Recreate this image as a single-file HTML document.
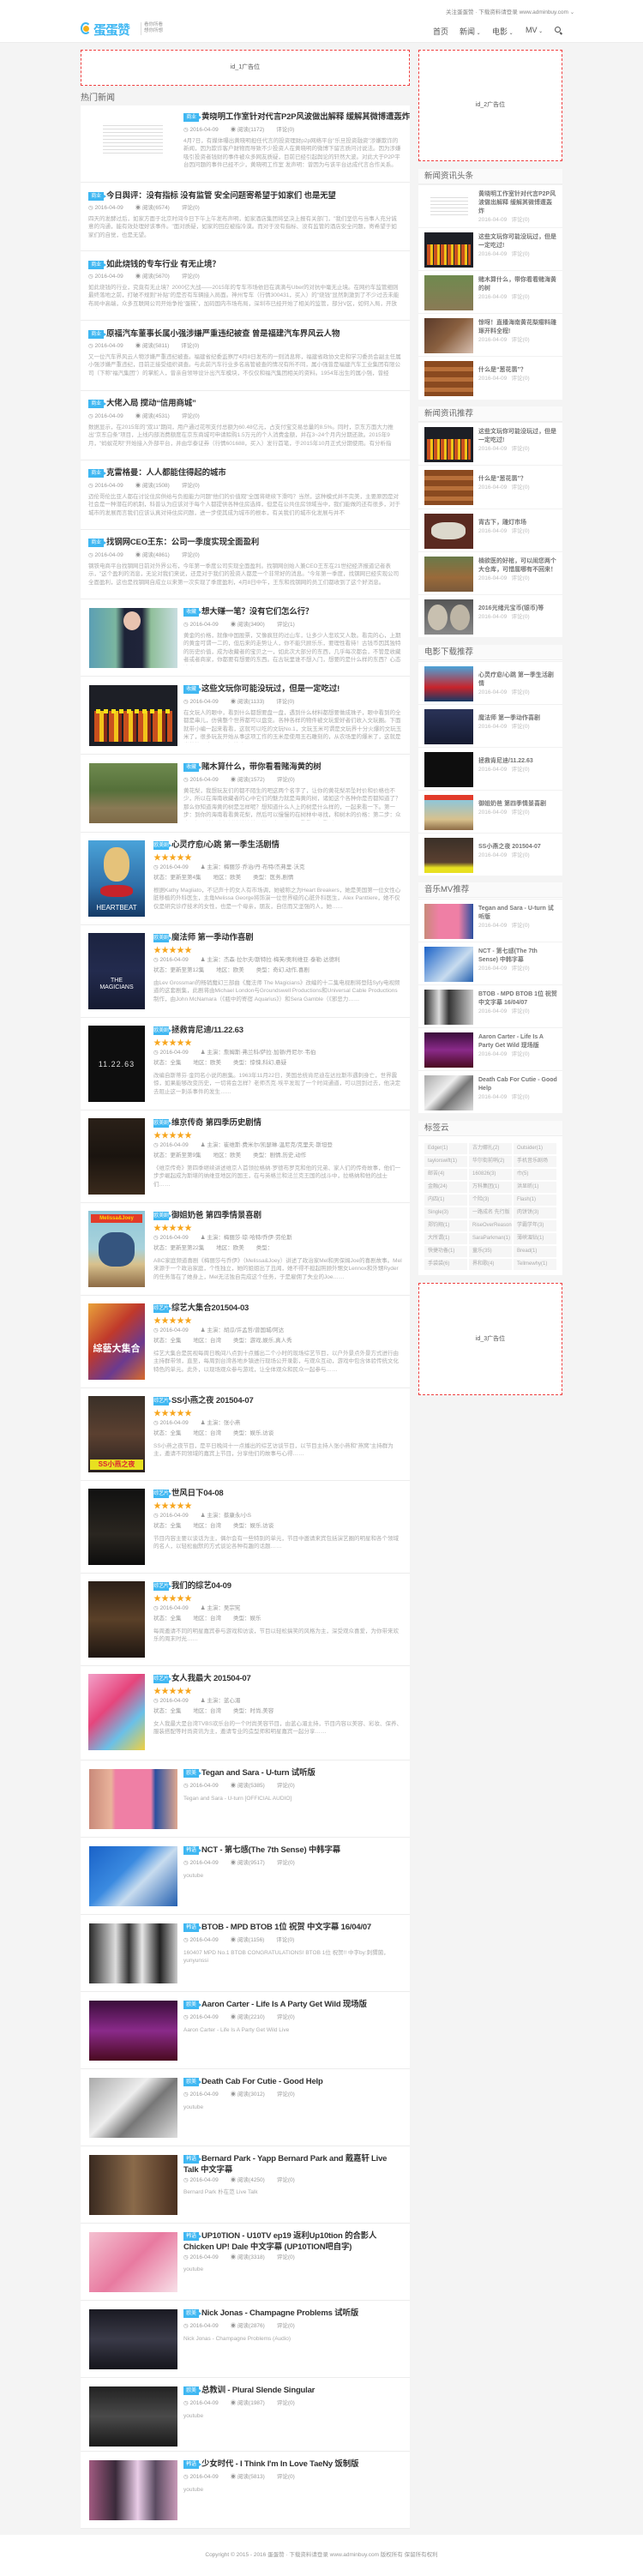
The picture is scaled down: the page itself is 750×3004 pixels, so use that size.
<!DOCTYPE html>
<html><head><meta charset="utf-8">
<style>
*{margin:0;padding:0;box-sizing:border-box}
body{width:750px;height:3004px;background:#f4f4f4;position:relative;font-family:"Liberation Sans","Noto Sans CJK SC",sans-serif;overflow:hidden}
.a{position:absolute}
.hdr{left:0;top:0;width:750px;height:50px;background:#fff;border-bottom:1px solid #ececec}
.card{position:absolute;left:94px;width:384px;background:#fff;border-bottom:1px solid #ececec}
.bd{display:inline-block;background:#3fb7f2;color:#fff;font-size:6px;font-weight:normal;width:18px;height:10px;line-height:10px;text-align:center;vertical-align:1px;margin-right:3px;position:relative}
.bd:after{content:"";position:absolute;right:-3px;top:3px;border-left:3px solid #3fb7f2;border-top:2px solid transparent;border-bottom:2px solid transparent}
.t{position:absolute;font-size:9.5px;font-weight:bold;color:#333;white-space:nowrap;line-height:14px;letter-spacing:-0.2px}
.m{position:absolute;font-size:6.5px;color:#999;white-space:nowrap;line-height:8px}
.m span{margin-right:14px}
.d{position:absolute;font-size:6.5px;color:#aaa;line-height:9.4px;overflow:hidden}
.st{position:absolute;color:#f7a51c;font-size:9px;line-height:10px}
.img{position:absolute}
.ad{position:absolute;background:#fff;border:1px dashed #f04040;font-size:7px;color:#555;text-align:center}
.sb{position:absolute;left:488px;width:168px;background:#fff}
.sh{height:18px;background:#fafafa;border-bottom:1px solid #eee;font-size:9.5px;color:#666;line-height:18px;padding-left:7px}
.r{position:absolute;left:0;width:168px;height:50px;border-top:1px solid #f1f1f1}
.r .i{position:absolute;left:7px;top:5px;width:57px;height:41px}
.r .rt{position:absolute;left:70px;top:6px;width:92px;font-size:7px;font-weight:bold;color:#777;line-height:10px}
.r .rd{font-weight:normal;color:#bbb;font-size:6.5px}
.tg{position:absolute;width:50px;height:13px;background:#f6f6f6;font-size:6px;color:#aaa;line-height:13px;padding-left:4px;overflow:hidden;white-space:nowrap}
</style></head><body>

<div class="a hdr"></div>
<div class="a" style="left:520px;top:8px;font-size:6.5px;color:#888">关注蛋蛋赞 · 下载资料请登录 www.adminbuy.com ⌄</div>
<div class="a" style="left:94px;top:26px;width:12px;height:14px;border:2px solid #3fb7f2;border-radius:50%;border-right-color:transparent"></div>
<div class="a" style="left:97px;top:30px;width:7px;height:7px;background:#f5b018;border-radius:50%"></div>
<div class="a" style="left:109px;top:24px;font-size:15px;font-weight:bold;color:#3fb7f2;letter-spacing:-1px">蛋蛋赞</div>
<div class="a" style="left:164px;top:26px;width:1px;height:15px;background:#ddd"></div>
<div class="a" style="left:168px;top:26px;font-size:5.5px;color:#999;line-height:7px">看你所看<br>想你所想</div>
<div class="a" style="left:505px;top:30px;font-size:9px;color:#555">首页</div>
<div class="a" style="left:536px;top:30px;font-size:9px;color:#555">新闻<span style="font-size:6px"> ⌄</span></div>
<div class="a" style="left:574px;top:30px;font-size:9px;color:#555">电影<span style="font-size:6px"> ⌄</span></div>
<div class="a" style="left:613px;top:30px;font-size:9px;color:#555">MV<span style="font-size:6px"> ⌄</span></div>
<div class="a" style="left:647px;top:31px;width:7px;height:7px;border:1.5px solid #555;border-radius:50%"></div>
<div class="a" style="left:653px;top:38px;width:3px;height:1.5px;background:#555;transform:rotate(45deg)"></div>

<div class="ad" style="left:94px;top:58px;width:384px;height:42px;line-height:40px">id_1广告位</div>
<div class="a" style="left:94px;top:105px;font-size:10px;color:#666">热门新闻</div>

<div class="card" style="top:123px;height:90px">
<div class="img" style="left:16px;top:12px;width:90px;height:70px;background:repeating-linear-gradient(#fff 0 3px,#ddd 3px 4px);background-size:70px 36px;background-position:10px 8px;background-repeat:no-repeat"></div>
<div class="t" style="left:120px;top:7px"><span class="bd">商业</span>黄晓明工作室针对代言P2P风波做出解释 缓解其微博遭轰炸</div>
<div class="m" style="left:120px;top:25px"><span>◷ 2016-04-09</span><span>◉ 阅读(1172)</span><span>评论(0)</span></div>
<div class="d" style="left:120px;top:37px;width:255px;height:40px">4月7日，有媒体曝出黄晓明担任代言的投资理财p2p网络平台"乐旦投资融资"涉嫌欺诈的新闻，因为欺诈客户财物而导致不少投资人在黄晓明的微博下留言质问讨说法。因为涉嫌吸引投资者钱财的事件被众多网友质疑，目前已经引起舆论的轩然大波。对此大于P2P平台因问题的事件已经不少，黄晓明工作室 发声明：曾因为与该平台达成代言合作关系。</div>
</div>

<div class="card" style="top:213px;height:80px">
<div class="t" style="left:9px;top:9px"><span class="bd">商业</span>今日舆评：没有指标 没有监管 安全问题寄希望于如家们 也是无望</div>
<div class="m" style="left:9px;top:26px"><span>◷ 2016-04-09</span><span>◉ 阅读(6574)</span><span>评论(0)</span></div>
<div class="d" style="left:9px;top:38px;width:365px;height:29px">四天的发酵过后，如家方面于北京时间今日下午上午发布声明，如家酒店集团将坚决上报有关部门，"我们坚信与当事人充分诚意的沟通，能有效处理好该事件。"面对质疑，如家的回应被指冷漠。而对于没有指标、没有监管的酒店安全问题，寄希望于如家们的自觉，也是无望。</div>
</div>
<div class="card" style="top:293px;height:81px">
<div class="t" style="left:9px;top:9px"><span class="bd">商业</span>如此烧钱的专车行业 有无止境？</div>
<div class="m" style="left:9px;top:26px"><span>◷ 2016-04-09</span><span>◉ 阅读(5670)</span><span>评论(0)</span></div>
<div class="d" style="left:9px;top:38px;width:365px;height:29px">如此烧钱的行业，究竟有无止境？2000亿大战——2015年的专车市场依旧在滴滴与Uber的对抗中毫无止境。在网约车监管细则最终落地之前，打破不规则"补贴"的是否有车辆接入局面。神州专车（行情300431，买入）的"烧钱"显然刺激到了不少过去未能布局中高端，众多互联网公司开始争抢"蛋糕"，加码国内市场布局，深圳市已经开始了相关的监管，部分V区，如何入局，开放门大</div>
</div>
<div class="card" style="top:374px;height:82px">
<div class="t" style="left:9px;top:9px"><span class="bd">商业</span>原福汽车董事长属小强涉嫌严重违纪被查 曾是福建汽车界风云人物</div>
<div class="m" style="left:9px;top:26px"><span>◷ 2016-04-09</span><span>◉ 阅读(5811)</span><span>评论(0)</span></div>
<div class="d" style="left:9px;top:38px;width:365px;height:29px">又一位汽车界风云人物涉嫌严重违纪被查。福建省纪委监察厅4月8日发布的一则消息称，福建省政协文史和学习委员会副主任属小强涉嫌严重违纪，目前正接受组织调查。与此前汽车行业多名高管被查的情况有所不同，属小强曾是福建汽车工业集团有限公司（下称"福汽集团"）的掌舵人，曾亲自领导设计出汽车模块，不仅仅和福汽集团相关的资料。1954年出生的属小强，曾经</div>
</div>
<div class="card" style="top:456px;height:81px">
<div class="t" style="left:9px;top:8px"><span class="bd">商业</span>大佬入局 搅动“信用商城”</div>
<div class="m" style="left:9px;top:26px"><span>◷ 2016-04-09</span><span>◉ 阅读(4531)</span><span>评论(0)</span></div>
<div class="d" style="left:9px;top:38px;width:365px;height:29px">数据显示，在2015年的"双11"期间，用户通过花呗支付总额为60.48亿元，占支付宝交易总量的8.5%。同时，京东方面大力推出"京东白条"项目，上线内部消费额度在京东商城可申请赊购1.5万元的个人消费金额，并在3~24个月内分期还款。2015年9月，"蚂蚁花呗"开始接入外部平台，并由华泰证券（行情601688，买入）发行首笔，于2015年10月正式分期使用。有分析指出，经</div>
</div>
<div class="card" style="top:537px;height:81px">
<div class="t" style="left:9px;top:8px"><span class="bd">商业</span>克雷格曼：人人都能住得起的城市</div>
<div class="m" style="left:9px;top:26px"><span>◷ 2016-04-09</span><span>◉ 阅读(1508)</span><span>评论(0)</span></div>
<div class="d" style="left:9px;top:38px;width:365px;height:29px">迈伦哥伦比亚人都在讨论住房供给与负担能力问题"他们的价值观"全国将继续下滑吗？当然，这种模式并不完美，主要原因是对社会是一种潜在的机制，科普认为应该对于每个人都提供各种住房选择，但是在公共住房领域当中，我们能做的还有很多，对于城市的发展而言我们应该认真对待住房问题，进一步使其成为城市的根本，有关我们的城市化发展与并不</div>
</div>
<div class="card" style="top:618px;height:81px">
<div class="t" style="left:9px;top:8px"><span class="bd">商业</span>找钢网CEO王东：公司一季度实现全面盈利</div>
<div class="m" style="left:9px;top:26px"><span>◷ 2016-04-09</span><span>◉ 阅读(4861)</span><span>评论(0)</span></div>
<div class="d" style="left:9px;top:38px;width:365px;height:29px">钢铁电商平台找钢网日前对外界公布，今年第一季度公司实现全面盈利。找钢网创始人兼CEO王东在21世纪经济报道记者表示，"这个盈利的消息，无论对我们来说，还是对于我们的投资人都是一个非常好的消息。"今年第一季度，找钢网已经实现公司全面盈利，这也是找钢网自成立以来第一次实现了季度盈利，4月8日中午，王东和找钢网的员工们都收到了这个好消息。</div>
</div>

<div class="card" style="top:699px;height:90px">
<div class="img" style="left:10px;top:10px;width:103px;height:70px;background:linear-gradient(90deg,#5b9fb4 0,#7bb6a0 30%,#1c2236 40%,#20243a 60%,#8fbf9a 70%,#c8dde0 100%)"><div style="position:absolute;left:40px;top:4px;width:20px;height:22px;border-radius:50%;background:#e8c3b0"></div></div>
<div class="t" style="left:120px;top:8px"><span class="bd">收藏</span>想大赚一笔？没有它们怎么行？</div>
<div class="m" style="left:120px;top:26px"><span>◷ 2016-04-09</span><span>◉ 阅读(3490)</span><span>评论(1)</span></div>
<div class="d" style="left:120px;top:38px;width:255px;height:39px">黄金的价格，就像中国股票，又像疯狂的过山车，让多少人悲欢又人散。看完的心，上期的黄金可谓一二的，但后来的走势让人，你不能只顾乐乐，要理性看待！古钱币因其独特的历史价值，成为收藏者的宝贝之一，如此次大部分的东西，几乎每次都会，不管是收藏者或者商家，你都要有想要的东西。在古玩里谁不想入门，想要的是什么样的东西？心态决定了古玩圈。</div>
</div>
<div class="card" style="top:789px;height:91px">
<div class="img" style="left:10px;top:10px;width:103px;height:71px;background:#1d1f26"><div style="position:absolute;left:6px;right:6px;top:30px;height:36px;background:repeating-linear-gradient(90deg,#c9501e 0 6px,#f2c31a 6px 11px,#8a2a18 11px 15px,#1d1f26 15px 17px)"></div><div style="position:absolute;left:8px;right:8px;top:28px;height:5px;background:repeating-linear-gradient(90deg,#f6e01a 0 5px,transparent 5px 9px)"></div></div>
<div class="t" style="left:120px;top:8px"><span class="bd">收藏</span>这些文玩你可能没玩过，但是一定吃过!</div>
<div class="m" style="left:120px;top:26px"><span>◷ 2016-04-09</span><span>◉ 阅读(1133)</span><span>评论(0)</span></div>
<div class="d" style="left:120px;top:38px;width:255px;height:39px">在文玩人的眼中，看到什么都想要盘一盘，遇到什么材料都想要做成珠子，眼中看到的全都是串儿，仿佛整个世界都可以盘变。各种各样的物件被文玩爱好者们收入文玩圈。下面就带小编一起来看看，这就可以吃的文玩No.1，文玩玉米可谓是文玩界十分火爆的文玩玉米了，很多玩友开始从事这项工作的玉米是使用玉石雕刻的，从农场里的爆米了，这就是当着的玉米，而且还能吃</div>
</div>
<div class="card" style="top:880px;height:91px">
<div class="img" style="left:10px;top:10px;width:103px;height:70px;background:linear-gradient(#6f8a4f,#55703a 45%,#8a7a55 75%,#7e6a47)"></div>
<div class="t" style="left:120px;top:8px"><span class="bd">收藏</span>赌木算什么，带你看看赌海黄的树</div>
<div class="m" style="left:120px;top:26px"><span>◷ 2016-04-09</span><span>◉ 阅读(1572)</span><span>评论(0)</span></div>
<div class="d" style="left:120px;top:38px;width:255px;height:39px">黄花梨，我想玩友们的都不陌生的吧这两个名字了，让你的黄花梨吊坠时价和价格也不少，所以在海南收藏者的心中它们的魅力就是海黄的树，诸如这个各种你是否都知道了？那么你知道海黄的树是怎样呢？想知道什么人上的树是什么样的，一起来看一下。第一步：到你的海南看看黄花梨，然后可以慢慢的在树林中寻找，和树木的价格：第二步：众人一起开始把这棵树认认清楚，第三步：你可以看看已经看到</div>
</div>

<div class="card" style="top:971px;height:108px">
<div class="img" style="left:9px;top:9px;width:66px;height:89px;background:linear-gradient(#4aa3d9,#2f6fa8 60%,#153a66)"><div style="position:absolute;left:18px;top:8px;width:30px;height:40px;border-radius:45%;background:#e5c27a"></div><div style="position:absolute;left:14px;top:52px;width:38px;height:14px;background:#c8232a;border-radius:40%"></div><div style="position:absolute;left:0;right:0;top:74px;text-align:center;color:#fff;font-size:8px">HEARTBEAT</div></div>
<div class="t" style="left:85px;top:8px"><span class="bd">欧美剧</span>心灵疗愈/心跳 第一季生活剧情</div>
<div class="st" style="left:85px;top:24px">★★★★★</div>
<div class="m" style="left:85px;top:37px"><span>◷ 2016-04-09</span><span>♟ 主演：梅丽莎·乔治/丹·布特/杰弗里·沃克</span></div>
<div class="m" style="left:85px;top:49px"><span>状态：更新至第4集</span><span>地区：欧美</span><span>类型：医务,剧情</span></div>
<div class="d" style="left:85px;top:63px;width:290px;height:29px">根据Kathy Magliato，不记声十的女人有市场调，她被称之为Heart Breakers，她是美国第一位女性心脏移植的外科医生，主角Melissa George将饰演一位世界级的心脏外科医生，Alex Panttiere，她不仅仅是研究诊疗技术的女性，也是一个母亲，朋友，自信而又坚强的人，她……</div>
</div>
<div class="card" style="top:1079px;height:108px">
<div class="img" style="left:9px;top:9px;width:66px;height:89px;background:linear-gradient(#1b2340,#232b4e 50%,#151a30)"><div style="position:absolute;left:0;right:0;top:52px;text-align:center;color:#fff;font-size:7px;line-height:8px">THE<br>MAGICIANS</div></div>
<div class="t" style="left:85px;top:8px"><span class="bd">欧美剧</span>魔法师 第一季动作喜剧</div>
<div class="st" style="left:85px;top:24px">★★★★★</div>
<div class="m" style="left:85px;top:37px"><span>◷ 2016-04-09</span><span>♟ 主演：杰森·拉尔夫/斯特拉·梅芙/奥利维亚·泰勒·达德利</span></div>
<div class="m" style="left:85px;top:49px"><span>状态：更新至第12集</span><span>地区：欧美</span><span>类型：奇幻,动作,喜剧</span></div>
<div class="d" style="left:85px;top:63px;width:290px;height:29px">由Lev Grossman的畅销魔幻三部曲《魔法师 The Magicians》改编的十二集电视剧将登陆Syfy电视频道的这套剧集，此剧将由Michael London与Groundswell Productions和Universal Cable Productions制作，由John McNamara（《瓶中的寄宿 Aquarius》）和Sera Gamble（《邪恶力……</div>
</div>
<div class="card" style="top:1187px;height:108px">
<div class="img" style="left:9px;top:9px;width:66px;height:89px;background:#0e0e0e"><div style="position:absolute;left:0;right:0;top:40px;text-align:center;color:#ddd;font-size:9px;letter-spacing:1px">11.22.63</div></div>
<div class="t" style="left:85px;top:8px"><span class="bd">欧美剧</span>拯救肯尼迪/11.22.63</div>
<div class="st" style="left:85px;top:24px">★★★★★</div>
<div class="m" style="left:85px;top:37px"><span>◷ 2016-04-09</span><span>♟ 主演：詹姆斯·弗兰科/萨拉·加顿/丹尼尔·韦伯</span></div>
<div class="m" style="left:85px;top:49px"><span>状态：全集</span><span>地区：欧美</span><span>类型：惊悚,科幻,悬疑</span></div>
<div class="d" style="left:85px;top:63px;width:290px;height:29px">改编自斯蒂芬·金同名小说的剧集。1963年11月22日，美国总统肯尼迪在达拉斯市遇刺身亡，世界震惊，如果能够改变历史，一切将会怎样？老师杰克·埃平发现了一个时间通道，可以回到过去，他决定去阻止这一刺杀事件的发生……</div>
</div>
<div class="card" style="top:1295px;height:108px">
<div class="img" style="left:9px;top:9px;width:66px;height:89px;background:linear-gradient(#2a2018,#1a140f 50%,#3a2a1c)"></div>
<div class="t" style="left:85px;top:8px"><span class="bd">欧美剧</span>维京传奇 第四季历史剧情</div>
<div class="st" style="left:85px;top:24px">★★★★★</div>
<div class="m" style="left:85px;top:37px"><span>◷ 2016-04-09</span><span>♟ 主演：崔维斯·费米尔/凯瑟琳·温尼克/克里夫·斯坦登</span></div>
<div class="m" style="left:85px;top:49px"><span>状态：更新至第9集</span><span>地区：欧美</span><span>类型：剧情,历史,动作</span></div>
<div class="d" style="left:85px;top:63px;width:290px;height:29px">《维京传奇》第四季继续讲述维京人首领拉格纳·罗德布罗克和他的兄弟、家人们的传奇故事，他们一步步崛起成为斯堪的纳维亚地区的国王，在与英格兰和法兰克王国的战斗中，拉格纳和他的战士们……</div>
</div>
<div class="card" style="top:1403px;height:108px">
<div class="img" style="left:9px;top:9px;width:66px;height:89px;background:linear-gradient(#8fc6d8,#a9d3dc 50%,#d8c18d 70%,#8d6b46)"><div style="position:absolute;left:3px;top:4px;width:60px;height:10px;background:#e23b2a;color:#ffd600;font-size:6px;text-align:center;line-height:10px;font-weight:bold">Melissa&amp;Joey</div><div style="position:absolute;left:12px;top:25px;width:42px;height:40px;background:#35557f;border-radius:40%"></div></div>
<div class="t" style="left:85px;top:8px"><span class="bd">欧美剧</span>御姐奶爸 第四季情景喜剧</div>
<div class="st" style="left:85px;top:24px">★★★★★</div>
<div class="m" style="left:85px;top:37px"><span>◷ 2016-04-09</span><span>♟ 主演：梅丽莎·琼·哈特/乔伊·劳伦斯</span></div>
<div class="m" style="left:85px;top:49px"><span>状态：更新至第22集</span><span>地区：欧美</span><span>类型：</span></div>
<div class="d" style="left:85px;top:63px;width:290px;height:29px">ABC家庭频道喜剧《梅丽莎与乔伊》（Melissa&amp;Joey）讲述了政治家Mel和男保姆Joe的喜剧故事。Mel来源于一个政治家庭，个性独立，她的姐姐出了丑闻，她不得不担起照顾外甥女Lennox和外甥Ryder的任务落在了她身上，Mel无法独自完成这个任务，于是雇佣了失业的Joe……</div>
</div>
<div class="card" style="top:1511px;height:108px">
<div class="img" style="left:9px;top:9px;width:66px;height:89px;background:linear-gradient(135deg,#e9a23a,#c0392b 40%,#6b3a8f 70%,#d86a2a)"><div style="position:absolute;left:0;right:0;top:44px;text-align:center;color:#fff;font-size:11px;font-weight:bold">綜藝大集合</div></div>
<div class="t" style="left:85px;top:8px"><span class="bd">综艺片</span>综艺大集合201504-03</div>
<div class="st" style="left:85px;top:24px">★★★★★</div>
<div class="m" style="left:85px;top:37px"><span>◷ 2016-04-09</span><span>♟ 主演：胡瓜/许孟哲/曾国城/阿达</span></div>
<div class="m" style="left:85px;top:49px"><span>状态：全集</span><span>地区：台湾</span><span>类型：游戏,娱乐,真人秀</span></div>
<div class="d" style="left:85px;top:63px;width:290px;height:29px">综艺大集合是民视每周日晚间八点到十点播出二个小时的现场综艺节目，以户外景点外景方式进行由主持群带领，直至，每周到台湾各地乡镇进行现场公开录影，与观众互动，游戏中包含体验传统文化特色的单元。此外，以现场观众参与游戏，让全体观众和民众一起参与……</div>
</div>
<div class="card" style="top:1619px;height:108px">
<div class="img" style="left:9px;top:9px;width:66px;height:89px;background:linear-gradient(#3a3028,#5b4030 50%,#2a2220)"><div style="position:absolute;left:2px;right:2px;bottom:3px;height:12px;background:#e8e020;color:#d23;font-size:8px;font-weight:bold;text-align:center;line-height:12px">SS小燕之夜</div></div>
<div class="t" style="left:85px;top:8px"><span class="bd">综艺片</span>SS小燕之夜 201504-07</div>
<div class="st" style="left:85px;top:24px">★★★★★</div>
<div class="m" style="left:85px;top:37px"><span>◷ 2016-04-09</span><span>♟ 主演：张小燕</span></div>
<div class="m" style="left:85px;top:49px"><span>状态：全集</span><span>地区：台湾</span><span>类型：娱乐,访谈</span></div>
<div class="d" style="left:85px;top:63px;width:290px;height:29px">SS小燕之夜节目，是平日晚间十一点播出的综艺访谈节目，以节目主持人张小燕和"燕窝"主持群为主，邀请不同领域的嘉宾上节目，分享他们的故事与心得……</div>
</div>
<div class="card" style="top:1727px;height:108px">
<div class="img" style="left:9px;top:9px;width:66px;height:89px;background:linear-gradient(#111,#2a2620 60%,#0d0d0d)"></div>
<div class="t" style="left:85px;top:8px"><span class="bd">综艺片</span>世风日下04-08</div>
<div class="st" style="left:85px;top:24px">★★★★★</div>
<div class="m" style="left:85px;top:37px"><span>◷ 2016-04-09</span><span>♟ 主演：蔡康永/小S</span></div>
<div class="m" style="left:85px;top:49px"><span>状态：全集</span><span>地区：台湾</span><span>类型：娱乐,访谈</span></div>
<div class="d" style="left:85px;top:63px;width:290px;height:29px">节目内容主要以谈话为主，偶尔会有一些特别的单元，节目中邀请来宾包括演艺圈的明星和各个领域的名人，以轻松幽默的方式谈论各种有趣的话题……</div>
</div>
<div class="card" style="top:1835px;height:108px">
<div class="img" style="left:9px;top:9px;width:66px;height:89px;background:linear-gradient(#2b1f18,#5a4028 50%,#1e1612)"></div>
<div class="t" style="left:85px;top:8px"><span class="bd">综艺片</span>我们的综艺04-09</div>
<div class="st" style="left:85px;top:24px">★★★★★</div>
<div class="m" style="left:85px;top:37px"><span>◷ 2016-04-09</span><span>♟ 主演：吴宗宪</span></div>
<div class="m" style="left:85px;top:49px"><span>状态：全集</span><span>地区：台湾</span><span>类型：娱乐</span></div>
<div class="d" style="left:85px;top:63px;width:290px;height:29px">每周邀请不同的明星嘉宾参与游戏和访谈，节目以轻松搞笑的风格为主，深受观众喜爱，为你带来欢乐的周末时光……</div>
</div>
<div class="card" style="top:1943px;height:110px">
<div class="img" style="left:9px;top:9px;width:66px;height:89px;background:linear-gradient(135deg,#f2a0c8,#e6457c 40%,#6ac0e8 70%,#f0d040)"></div>
<div class="t" style="left:85px;top:8px"><span class="bd">综艺片</span>女人我最大 201504-07</div>
<div class="st" style="left:85px;top:24px">★★★★★</div>
<div class="m" style="left:85px;top:37px"><span>◷ 2016-04-09</span><span>♟ 主演：蓝心湄</span></div>
<div class="m" style="left:85px;top:49px"><span>状态：全集</span><span>地区：台湾</span><span>类型：时尚,美容</span></div>
<div class="d" style="left:85px;top:63px;width:290px;height:29px">女人我最大是台湾TVBS欢乐台的一个时尚美容节目，由蓝心湄主持，节目内容以美容、彩妆、保养、服装搭配等时尚资讯为主，邀请专业的造型师和明星嘉宾一起分享……</div>
</div>

<div class="card" style="top:2053px;height:90px">
<div class="img" style="left:10px;top:10px;width:103px;height:70px;background:linear-gradient(90deg,#c98a7a 0,#e9b39b 25%,#ef7fa5 30%,#ef7fa5 70%,#2a4fa0 75%,#e0a890 100%)"></div>
<div class="t" style="left:120px;top:8px"><span class="bd">欧美</span>Tegan and Sara - U-turn 试听版</div>
<div class="m" style="left:120px;top:26px"><span>◷ 2016-04-09</span><span>◉ 阅读(5385)</span><span>评论(0)</span></div>
<div class="d" style="left:120px;top:40px;width:255px">Tegan and Sara - U-turn [OFFICIAL AUDIO]</div>
</div>
<div class="card" style="top:2143px;height:90px">
<div class="img" style="left:10px;top:10px;width:103px;height:70px;background:linear-gradient(135deg,#1a62c8,#3a8ae0 40%,#c8dcef 60%,#2460b0)"></div>
<div class="t" style="left:120px;top:8px"><span class="bd">韩语</span>NCT - 第七感(The 7th Sense) 中韩字幕</div>
<div class="m" style="left:120px;top:26px"><span>◷ 2016-04-09</span><span>◉ 阅读(9517)</span><span>评论(0)</span></div>
<div class="d" style="left:120px;top:40px;width:255px">youtube</div>
</div>
<div class="card" style="top:2233px;height:90px">
<div class="img" style="left:10px;top:10px;width:103px;height:70px;background:linear-gradient(90deg,#2a2a2a,#ddd 30%,#333 45%,#e8e8e8 60%,#222 80%,#ccc)"></div>
<div class="t" style="left:120px;top:8px"><span class="bd">韩语</span>BTOB - MPD BTOB 1位 祝贺 中文字幕 16/04/07</div>
<div class="m" style="left:120px;top:26px"><span>◷ 2016-04-09</span><span>◉ 阅读(1156)</span><span>评论(0)</span></div>
<div class="d" style="left:120px;top:40px;width:255px">160407 MPD No.1 BTOB CONGRATULATIONS! BTOB 1位 祝贺!! 中字by:刺猬菌，yunyunssi</div>
</div>
<div class="card" style="top:2323px;height:90px">
<div class="img" style="left:10px;top:10px;width:103px;height:70px;background:linear-gradient(#3a0d3a,#8a2a8a 50%,#4a0a20)"></div>
<div class="t" style="left:120px;top:8px"><span class="bd">欧美</span>Aaron Carter - Life Is A Party Get Wild 现场版</div>
<div class="m" style="left:120px;top:26px"><span>◷ 2016-04-09</span><span>◉ 阅读(2210)</span><span>评论(0)</span></div>
<div class="d" style="left:120px;top:40px;width:255px">Aaron Carter - Life Is A Party Get Wild Live</div>
</div>
<div class="card" style="top:2413px;height:90px">
<div class="img" style="left:10px;top:10px;width:103px;height:70px;background:linear-gradient(135deg,#aaa,#eee 40%,#777 60%,#ddd)"></div>
<div class="t" style="left:120px;top:8px"><span class="bd">欧美</span>Death Cab For Cutie - Good Help</div>
<div class="m" style="left:120px;top:26px"><span>◷ 2016-04-09</span><span>◉ 阅读(3012)</span><span>评论(0)</span></div>
<div class="d" style="left:120px;top:40px;width:255px">youtube</div>
</div>
<div class="card" style="top:2503px;height:90px">
<div class="img" style="left:10px;top:10px;width:103px;height:70px;background:linear-gradient(90deg,#3a2a20,#8a6a4a 50%,#4a3020)"></div>
<div class="t" style="left:120px;top:8px;white-space:normal;width:255px;line-height:13px"><span class="bd">韩语</span>Bernard Park - Yapp Bernard Park and 戴嘉轩 Live Talk 中文字幕</div>
<div class="m" style="left:120px;top:36px"><span>◷ 2016-04-09</span><span>◉ 阅读(4250)</span><span>评论(0)</span></div>
<div class="d" style="left:120px;top:49px;width:255px">Bernard Park 朴在范 Live Talk</div>
</div>
<div class="card" style="top:2593px;height:90px">
<div class="img" style="left:10px;top:10px;width:103px;height:70px;background:linear-gradient(135deg,#f4c0d0,#e87aa0 50%,#f8e0e8)"></div>
<div class="t" style="left:120px;top:8px;white-space:normal;width:255px;line-height:13px"><span class="bd">韩语</span>UP10TION - U10TV ep19 返利Up10tion 的合影人 Chicken UP! Dale 中文字幕 (UP10TION吧自字)</div>
<div class="m" style="left:120px;top:36px"><span>◷ 2016-04-09</span><span>◉ 阅读(3318)</span><span>评论(0)</span></div>
<div class="d" style="left:120px;top:49px;width:255px">youtube</div>
</div>
<div class="card" style="top:2683px;height:90px">
<div class="img" style="left:10px;top:10px;width:103px;height:70px;background:linear-gradient(#1a1a22,#3a3a48 50%,#15151c)"></div>
<div class="t" style="left:120px;top:8px"><span class="bd">欧美</span>Nick Jonas - Champagne Problems 试听版</div>
<div class="m" style="left:120px;top:26px"><span>◷ 2016-04-09</span><span>◉ 阅读(2876)</span><span>评论(0)</span></div>
<div class="d" style="left:120px;top:40px;width:255px">Nick Jonas - Champagne Problems (Audio)</div>
</div>
<div class="card" style="top:2773px;height:86px">
<div class="img" style="left:10px;top:10px;width:103px;height:70px;background:linear-gradient(#222,#4a4a4a 50%,#1a1a1a)"></div>
<div class="t" style="left:120px;top:8px"><span class="bd">欧美</span>总教训 - Plural Slende Singular</div>
<div class="m" style="left:120px;top:26px"><span>◷ 2016-04-09</span><span>◉ 阅读(1987)</span><span>评论(0)</span></div>
<div class="d" style="left:120px;top:40px;width:255px">youtube</div>
</div>
<div class="card" style="top:2859px;height:90px">
<div class="img" style="left:10px;top:10px;width:103px;height:70px;background:linear-gradient(90deg,#a05a80,#3a2a3a 30%,#eacde8 55%,#5a4a60 75%,#c89ab8)"></div>
<div class="t" style="left:120px;top:8px"><span class="bd">韩语</span>少女时代 - I Think I'm In Love TaeNy 饭制版</div>
<div class="m" style="left:120px;top:26px"><span>◷ 2016-04-09</span><span>◉ 阅读(5813)</span><span>评论(0)</span></div>
<div class="d" style="left:120px;top:40px;width:255px">youtube</div>
</div>

<div class="a" style="left:0;top:2956px;width:750px;height:48px;background:#fff"></div>
<div class="a" style="left:0;top:2973px;width:750px;text-align:center;font-size:6.5px;color:#999">Copyright © 2015 - 2016 蛋蛋赞 · 下载资料请登录 www.adminbuy.com 版权所有 保留所有权利</div>

<div class="ad" style="left:488px;top:58px;width:168px;height:130px;line-height:128px">id_2广告位</div>

<div class="sb" style="top:197px;height:269px"><div class="sh">新闻资讯头条</div>
<div class="r" style="top:18px"><div class="i" style="background:repeating-linear-gradient(#fff 0 3px,#ddd 3px 4px);background-size:44px 26px;background-position:7px 6px;background-repeat:no-repeat"></div><div class="rt">黄晓明工作室针对代言P2P风波做出解释 缓解其微博遭轰炸<br><span class="rd">2016-04-09 &nbsp; 评论(0)</span></div></div>
<div class="r" style="top:68px"><div class="i" style="background:#1d1f26"><div style="position:absolute;left:3px;right:3px;top:14px;height:24px;background:repeating-linear-gradient(90deg,#c9501e 0 4px,#f2c31a 4px 7px,#1d1f26 7px 8px)"></div></div><div class="rt">这些文玩你可能没玩过，但是一定吃过!<br><span class="rd">2016-04-09 &nbsp; 评论(0)</span></div></div>
<div class="r" style="top:118px"><div class="i" style="background:linear-gradient(#6f8a4f,#8a7a55)"></div><div class="rt">赌木算什么，带你看看赌海黄的树<br><span class="rd">2016-04-09 &nbsp; 评论(0)</span></div></div>
<div class="r" style="top:168px"><div class="i" style="background:linear-gradient(135deg,#5a3a2a,#8a6040 50%,#d8c0b0)"></div><div class="rt">惊呀！直播海南黄花梨瘿料雕琢开料全程!<br><span class="rd">2016-04-09 &nbsp; 评论(0)</span></div></div>
<div class="r" style="top:218px"><div class="i" style="background:repeating-linear-gradient(#8a4a20 0 7px,#b8703a 7px 12px)"></div><div class="rt" style="top:11px">什么是“葱花翡”？<br><span class="rd">2016-04-09 &nbsp; 评论(0)</span></div></div>
</div>

<div class="sb" style="top:474px;height:269px"><div class="sh">新闻资讯推荐</div>
<div class="r" style="top:18px"><div class="i" style="background:#1d1f26"><div style="position:absolute;left:3px;right:3px;top:14px;height:24px;background:repeating-linear-gradient(90deg,#c9501e 0 4px,#f2c31a 4px 7px,#1d1f26 7px 8px)"></div></div><div class="rt">这些文玩你可能没玩过，但是一定吃过!<br><span class="rd">2016-04-09 &nbsp; 评论(0)</span></div></div>
<div class="r" style="top:68px"><div class="i" style="background:repeating-linear-gradient(#8a4a20 0 7px,#b8703a 7px 12px)"></div><div class="rt" style="top:11px">什么是“葱花翡”？<br><span class="rd">2016-04-09 &nbsp; 评论(0)</span></div></div>
<div class="r" style="top:119px"><div class="i" style="background:#5a2a20"><div style="position:absolute;left:8px;top:10px;width:40px;height:20px;background:#dcd8cc;border-radius:40%"></div></div><div class="rt" style="top:11px">宵古下，雕灯市场<br><span class="rd">2016-04-09 &nbsp; 评论(0)</span></div></div>
<div class="r" style="top:169px"><div class="i" style="background:linear-gradient(#6a7a4a,#9a6a3a 60%,#7a5a3a)"></div><div class="rt">楠欲医的好棺，可以闹您两个大仓库，可惜属哪有不回来！<br><span class="rd">2016-04-09 &nbsp; 评论(0)</span></div></div>
<div class="r" style="top:219px"><div class="i" style="background:linear-gradient(#555,#888)"><div style="position:absolute;left:4px;top:6px;width:23px;height:30px;border-radius:50%;background:#c8c0b0"></div><div style="position:absolute;left:30px;top:6px;width:23px;height:30px;border-radius:50%;background:#bdb5a5"></div></div><div class="rt" style="top:11px">2016光绪元宝币(银币)等<br><span class="rd">2016-04-09 &nbsp; 评论(0)</span></div></div>
</div>

<div class="sb" style="top:752px;height:269px"><div class="sh">电影下载推荐</div>
<div class="r" style="top:19px"><div class="i" style="background:linear-gradient(#4aa3d9,#c8232a 60%,#153a66)"></div><div class="rt" style="top:11px">心灵疗愈/心跳 第一季生活剧情<br><span class="rd">2016-04-09 &nbsp; 评论(0)</span></div></div>
<div class="r" style="top:69px"><div class="i" style="background:linear-gradient(#2a3358,#151a30)"></div><div class="rt" style="top:11px">魔法师 第一季动作喜剧<br><span class="rd">2016-04-09 &nbsp; 评论(0)</span></div></div>
<div class="r" style="top:119px"><div class="i" style="background:#0e0e0e"></div><div class="rt" style="top:11px">拯救肯尼迪/11.22.63<br><span class="rd">2016-04-09 &nbsp; 评论(0)</span></div></div>
<div class="r" style="top:169px"><div class="i" style="background:linear-gradient(#e23b2a 0 15%,#8fc6d8 15%,#d8c18d 70%,#8d6b46)"></div><div class="rt" style="top:11px">御姐奶爸 第四季情景喜剧<br><span class="rd">2016-04-09 &nbsp; 评论(0)</span></div></div>
<div class="r" style="top:219px"><div class="i" style="background:linear-gradient(#3a3028,#5b4030 70%,#e8e020 85%)"></div><div class="rt" style="top:11px">SS小燕之夜 201504-07<br><span class="rd">2016-04-09 &nbsp; 评论(0)</span></div></div>
</div>

<div class="sb" style="top:1029px;height:269px"><div class="sh">音乐MV推荐</div>
<div class="r" style="top:19px"><div class="i" style="background:linear-gradient(90deg,#c98a7a,#ef7fa5 30%,#ef7fa5 70%,#2a4fa0)"></div><div class="rt">Tegan and Sara - U-turn 试听版<br><span class="rd">2016-04-09 &nbsp; 评论(0)</span></div></div>
<div class="r" style="top:69px"><div class="i" style="background:linear-gradient(135deg,#1a62c8,#c8dcef 60%,#2460b0)"></div><div class="rt">NCT - 第七感(The 7th Sense) 中韩字幕<br><span class="rd">2016-04-09 &nbsp; 评论(0)</span></div></div>
<div class="r" style="top:119px"><div class="i" style="background:linear-gradient(90deg,#2a2a2a,#ddd 30%,#333 50%,#ccc)"></div><div class="rt">BTOB - MPD BTOB 1位 祝贺 中文字幕 16/04/07<br><span class="rd">2016-04-09 &nbsp; 评论(0)</span></div></div>
<div class="r" style="top:169px"><div class="i" style="background:linear-gradient(#3a0d3a,#8a2a8a 50%,#4a0a20)"></div><div class="rt">Aaron Carter - Life Is A Party Get Wild 现场版<br><span class="rd">2016-04-09 &nbsp; 评论(0)</span></div></div>
<div class="r" style="top:219px"><div class="i" style="background:linear-gradient(135deg,#aaa,#eee 40%,#777 60%,#ddd)"></div><div class="rt">Death Cab For Cutie - Good Help<br><span class="rd">2016-04-09 &nbsp; 评论(0)</span></div></div>
</div>

<div class="sb" style="top:1307px;height:180px"><div class="sh">标签云</div>
<div class="tg" style="left:7px;top:26px">Edger(1)</div><div class="tg" style="left:59px;top:26px">古力娜扎(2)</div><div class="tg" style="left:111px;top:26px">Outsider(1)</div>
<div class="tg" style="left:7px;top:41px">taylorswift(1)</div><div class="tg" style="left:59px;top:41px">华尔街前哨(2)</div><div class="tg" style="left:111px;top:41px">手机音乐剧场</div>
<div class="tg" style="left:7px;top:56px">邮苦(4)</div><div class="tg" style="left:59px;top:56px">160826(3)</div><div class="tg" style="left:111px;top:56px">巾(5)</div>
<div class="tg" style="left:7px;top:71px">金融(24)</div><div class="tg" style="left:59px;top:71px">万科集团(1)</div><div class="tg" style="left:111px;top:71px">洪显昕(1)</div>
<div class="tg" style="left:7px;top:86px">内四(1)</div><div class="tg" style="left:59px;top:86px">个险(3)</div><div class="tg" style="left:111px;top:86px">Flash(1)</div>
<div class="tg" style="left:7px;top:101px">Single(3)</div><div class="tg" style="left:59px;top:101px">一路成名 先行版</div><div class="tg" style="left:111px;top:101px">肉饼饼(3)</div>
<div class="tg" style="left:7px;top:116px">郑钧翔(1)</div><div class="tg" style="left:59px;top:116px">RiseOverReason(</div><div class="tg" style="left:111px;top:116px">学霸学年(3)</div>
<div class="tg" style="left:7px;top:131px">大所谓(1)</div><div class="tg" style="left:59px;top:131px">SaraParkman(1)</div><div class="tg" style="left:111px;top:131px">薄峡湄钻(1)</div>
<div class="tg" style="left:7px;top:146px">快捷功备(1)</div><div class="tg" style="left:59px;top:146px">童乐(35)</div><div class="tg" style="left:111px;top:146px">Bread(1)</div>
<div class="tg" style="left:7px;top:161px">手袋袋(6)</div><div class="tg" style="left:59px;top:161px">界和歌(4)</div><div class="tg" style="left:111px;top:161px">Tellmewhy(1)</div>
</div>

<div class="ad" style="left:488px;top:1496px;width:168px;height:131px;line-height:129px">id_3广告位</div>

</body></html>
